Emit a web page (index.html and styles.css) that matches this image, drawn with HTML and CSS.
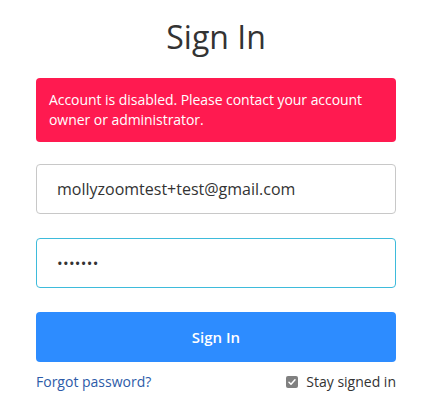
FILE: index.html
```html
<!DOCTYPE html>
<html>
<head>
<meta charset="utf-8">
<link rel="stylesheet" href="styles.css">
</head>
<body>
<div class="wrap">
  <h1 class="title">Sign In</h1>
  <div class="alert">Account is disabled. Please contact your account owner or administrator.</div>
  <div class="field">mollyzoomtest+test@gmail.com</div>
  <div class="field focus"><span class="dots">•••••••</span></div>
  <button class="btn">Sign In</button>
  <div class="foot">
    <a class="link" href="#">Forgot password?</a>
    <label class="stay"><span class="check"><svg viewBox="0 0 12 12" width="12" height="12"><path d="M3 6.3 L5 8.2 L9 3.8" fill="none" stroke="#fff" stroke-width="1.5" stroke-linecap="round" stroke-linejoin="round"/></svg></span>Stay signed in</label>
  </div>
</div>
</body>
</html>
```
FILE: styles.css
```css
html, body { margin: 0; padding: 0; background: #fff; }
body { font-family: "Open Sans", "Liberation Sans", sans-serif; color: #333; }
.wrap { width: 360px; margin-left: 36px; padding-top: 13px; display: flex; flex-direction: column; }
.title { margin: 0; font-size: 32px; font-weight: 400; line-height: 48px; text-align: center; color: #333; }
.alert { margin-top: 17px; background: #ff1a50; color: #fff; border-radius: 4px; padding: 12px 13px; font-size: 14px; letter-spacing: -0.05px; line-height: 20px; }
.field { margin-top: 22px; height: 50px; box-sizing: border-box; border: 1px solid #c8c8c8; border-radius: 4px; padding: 0 20px; display: flex; align-items: center; font-size: 16px; color: #333; }
.field + .field { margin-top: 24px; }
.field.focus { border-color: #3ebbdb; }
.dots { font-size: 15px; letter-spacing: 0.3px; color: #333; }
.btn { margin-top: 24px; height: 50px; border: 0; border-radius: 4px; background: #2d8cff; color: #fff; font-family: inherit; font-size: 15px; font-weight: 600; }
.foot { display: flex; justify-content: space-between; align-items: center; margin-top: 10px; font-size: 14px; }
.link { color: #2d5ba8; text-decoration: none; }
.stay { display: flex; align-items: center; color: #333; }
.check { width: 12px; height: 12px; border-radius: 2px; background: #808080; margin-right: 8px; display: flex; }
```
